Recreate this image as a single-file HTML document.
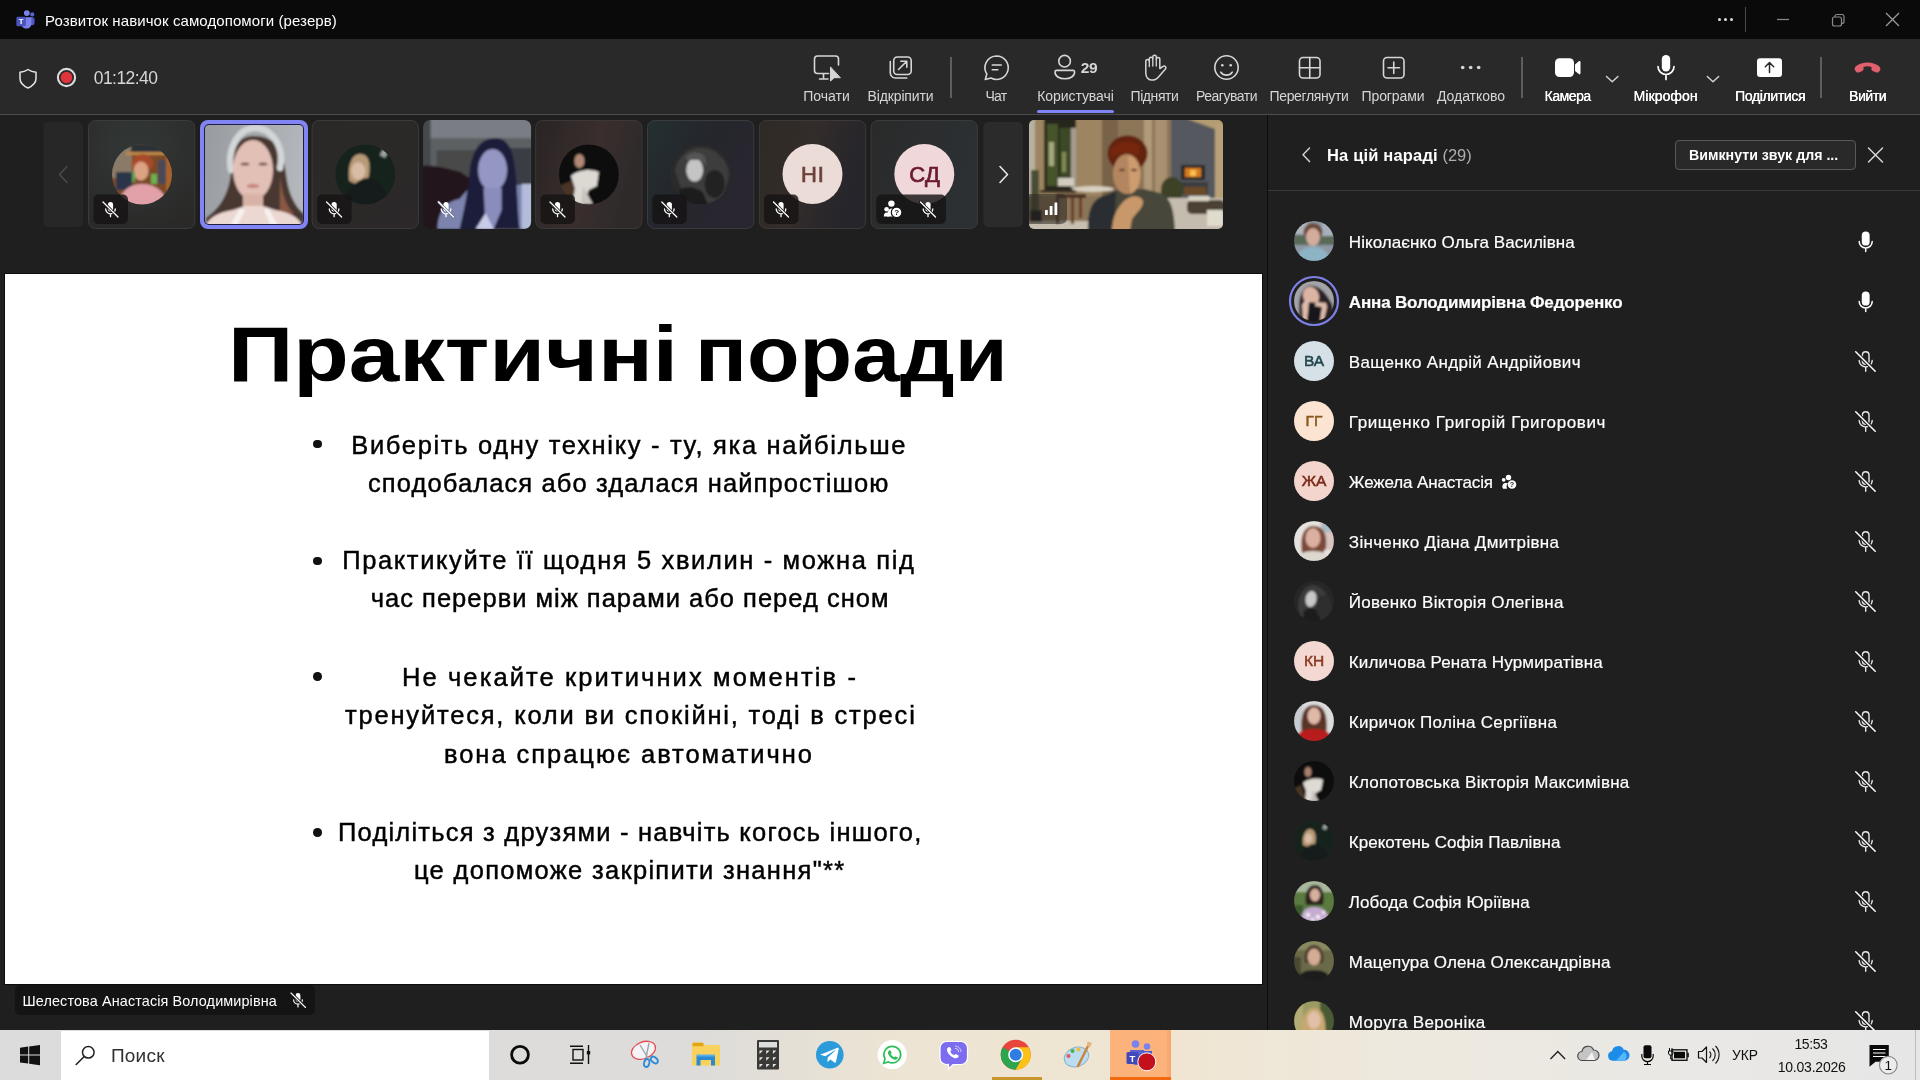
<!DOCTYPE html>
<html lang="uk">
<head>
<meta charset="utf-8">
<title>Розвиток навичок самодопомоги (резерв)</title>
<style>
*{box-sizing:border-box;margin:0;padding:0}
body{will-change:transform}
html,body{width:1920px;height:1080px;overflow:hidden;background:#1f1f1f;font-family:"Liberation Sans",sans-serif;color:#fff}
svg{display:block;overflow:visible}
.abs{position:absolute}
#titlebar{position:absolute;left:0;top:0;width:1920px;height:39px;background:#0a0a0a}
#titlebar .ttl{letter-spacing:0.090px;position:absolute;left:45px;top:12px;font-size:15px;line-height:18px;color:#fff;white-space:nowrap}
#toolbar{position:absolute;left:0;top:39px;width:1920px;height:76px;background:#292929;border-bottom:1px solid #4c4c4c}
#timer{letter-spacing:-0.540px;position:absolute;left:93.700px;top:29px;font-size:17.5px;line-height:20px;color:#d6d6d6;white-space:nowrap}
.lb{position:absolute;top:49px;width:140px;margin-left:-70px;text-align:center;font-size:14px;line-height:16px;color:#d6d6d6;white-space:nowrap;letter-spacing:-0.250px}
.lb.w{color:#fff;text-shadow:0.35px 0 0 #fff}
.sep{position:absolute;width:1.500px;background:#5e5e5e;top:18px;height:41px}
#main{position:absolute;left:0;top:115px;width:1267px;height:915px;background:#1f1f1f}
#slide{box-shadow:0 0 0 1px #0c0c0c;position:absolute;left:5px;top:274px;width:1257px;height:710px;background:#fff;color:#000;overflow:hidden}
#panel{position:absolute;left:1267px;top:115px;width:653px;height:915px;background:#1f1f1f;border-left:1px solid #0c0c0c;overflow:hidden}
#taskbar{position:absolute;left:0;top:1030px;width:1920px;height:50px;background:linear-gradient(90deg,#dcdcdc 0,#dddcda 700px,#ede4d3 900px,#efe5d2 1180px,#eee9de 1400px,#e9e8e6 1700px,#e6e6e6 1920px);overflow:hidden}
.sl{position:absolute;font-size:25.500px;line-height:32px;white-space:nowrap;color:#000;-webkit-text-stroke:0.450px #000}
.dot{position:absolute;left:308px;width:8.600px;height:8.600px;border-radius:50%;background:#111}
.pn{-webkit-text-stroke:0.200px #fff;position:absolute;left:80.800px;font-size:17px;line-height:21px;white-space:nowrap;color:#fff}
.pn.b{font-weight:bold}
.st{top:35px;font-size:78px;line-height:90px;font-weight:bold;white-space:nowrap;transform-origin:0 0}
</style>
</head>
<body>
<div id="titlebar">
  <svg class="abs" style="left:14.500px;top:8.500px" width="20" height="20" viewBox="0 0 22 22">
    <circle cx="13" cy="4.5" r="3.2" fill="#7b83eb"/>
    <circle cx="19" cy="6" r="2.3" fill="#5b62c9"/>
    <rect x="15.5" y="9" width="6" height="9" rx="2.5" fill="#5059c9"/>
    <path d="M7 9h11v7.5a5 5 0 0 1-5 5h-1a5 5 0 0 1-5-5z" fill="#7b83eb"/>
    <rect x="1.5" y="8.5" width="10.5" height="10.5" rx="1.5" fill="#4b53bc"/>
    <text x="6.75" y="16.8" font-size="8.5" font-weight="bold" fill="#fff" text-anchor="middle" font-family="Liberation Sans, sans-serif">T</text>
  </svg>
  <div class="ttl">Розвиток навичок самодопомоги (резерв)</div>
  <svg class="abs" style="left:0;top:0" width="1920" height="39" viewBox="0 0 1920 39">
    <g fill="#e0e0e0"><circle cx="1719.5" cy="19.5" r="1.5"/><circle cx="1725.5" cy="19.5" r="1.5"/><circle cx="1731.5" cy="19.5" r="1.5"/></g>
    <rect x="1745" y="7" width="1" height="25" fill="#4a4a4a"/>
    <g stroke="#8a8a8a" stroke-width="1.2" fill="none">
      <path d="M1777 19.5h12"/>
      <rect x="1832.5" y="17" width="9" height="9" rx="2"/>
      <path d="M1835 17v-0.500a2 2 0 0 1 2-2h5a2 2 0 0 1 2 2v5a2 2 0 0 1-2 2h-0.500"/>
    </g>
    <path d="M1886 13l13 13M1899 13l-13 13" stroke="#9a9a9a" stroke-width="1.3" fill="none"/>
  </svg>
</div>
<div id="toolbar">
  <svg class="abs" style="left:0;top:0" width="1920" height="75" viewBox="0 39 1920 75" fill="none" stroke="#d6d6d6" stroke-width="1.6" stroke-linecap="round" stroke-linejoin="round">
    <!-- shield -->
    <path d="M28 69.500c3 2 5.500 2.500 8 2.800v6.200c0 4.500-3.500 7.500-8 9.500c-4.500-2-8-5-8-9.500v-6.200c2.500-0.300 5-0.800 8-2.800z" stroke="#e6e6e6" stroke-width="1.5"/>
    <!-- record -->
    <circle cx="66.500" cy="77.500" r="8.600" stroke="#dcdcdc" stroke-width="2.100"/>
    <circle cx="66.500" cy="77.500" r="5.800" fill="#e0343c" stroke="none"/>
    <!-- pochaty: monitor + cursor -->
    <path d="M828.500 73.500h-11a3 3 0 0 1-3-3v-11.500a3 3 0 0 1 3-3h18a3 3 0 0 1 3 3v6"/>
    <path d="M823.500 74v4.800M819.500 79h8.500"/>
    <path d="M830.500 67.300v13.700l3.700-3.300h5.800z" fill="#d6d6d6" stroke-width="1"/>
    <!-- vidkripyty -->
    <rect x="893.700" y="57" width="17.500" height="17.500" rx="3.500"/>
    <path d="M890.300 61.500v11.500a5 5 0 0 0 5 5h11.500"/>
    <path d="M898.500 69.500l7.800-7.800M900.800 61.300h6v6"/>
    <!-- chat -->
    <path d="M996.600 56a11.700 11.700 0 1 1-5.600 22l-5.700 1.500l1.500-5.500a11.700 11.700 0 0 1 9.800-18z"/>
    <path d="M992.300 65h9M992.300 69.800h5.500"/>
    <!-- people -->
    <circle cx="1064.600" cy="61.200" r="5.800"/>
    <path d="M1056.500 70.400h16.600a1.500 1.500 0 0 1 1.500 1.500c0 4.400-4.300 6.900-9.800 6.900s-9.800-2.500-9.800-6.900a1.500 1.500 0 0 1 1.500-1.500z"/>
    <!-- hand -->
    <path d="M1145.800 73V61.200a1.750 1.750 0 0 1 3.500 0V59a1.750 1.750 0 0 1 3.500 0V57.100a1.750 1.750 0 0 1 3.500 0V59.300a1.750 1.750 0 0 1 3.500 0V68.600l3.300-2.300a1.800 1.800 0 0 1 2.500 2.500L1158.300 77.200c-1.200 1.800-2.800 2.800-5 2.800h-2c-3 0-5.500-2.800-5.500-7z" stroke-width="1.500"/>
    <path d="M1149.300 61.200V66.500M1152.800 59V66M1156.300 59.300V66" stroke-width="1.300"/>
    <!-- smiley -->
    <circle cx="1226.500" cy="67.500" r="11.700"/>
    <path d="M1220.800 72.200a7 7 0 0 0 11.400 0"/>
    <circle cx="1222.300" cy="65.200" r="1.300" fill="#d6d6d6" stroke="none"/>
    <circle cx="1230.700" cy="65.200" r="1.300" fill="#d6d6d6" stroke="none"/>
    <!-- grid -->
    <rect x="1299.500" y="57.500" width="20.500" height="20.500" rx="3.500"/>
    <path d="M1309.750 57.500v20.500M1299.500 67.750h20.500"/>
    <!-- apps -->
    <rect x="1383.500" y="57.500" width="20.500" height="20.500" rx="3.500"/>
    <path d="M1393.750 62v11.500M1388 67.750h11.500"/>
    <!-- more -->
    <g fill="#d6d6d6" stroke="none"><circle cx="1462.700" cy="67.500" r="1.800"/><circle cx="1470.700" cy="67.500" r="1.800"/><circle cx="1478.700" cy="67.500" r="1.800"/></g>
    <!-- camera -->
    <g fill="#fff" stroke="none">
      <rect x="1555" y="58.300" width="19" height="18.800" rx="4.500"/>
      <path d="M1575 64.500l3.800-3.200a1 1 0 0 1 1.700 0.800v11.200a1 1 0 0 1-1.700 0.800l-3.800-3.200z"/>
    </g>
    <path d="M1606.500 76.500l5.700 5.200l5.700-5.200" stroke="#d6d6d6" stroke-width="1.400"/>
    <!-- mic -->
    <rect x="1661.800" y="55" width="8.400" height="16.400" rx="4.200" fill="#fff" stroke="none"/>
    <path d="M1658 66.500a8 8 0 0 0 16 0M1666 74.800v4.700" stroke="#fff" stroke-width="1.700"/>
    <path d="M1707.300 76.500l5.700 5.200l5.700-5.200" stroke="#d6d6d6" stroke-width="1.400"/>
    <!-- share -->
    <rect x="1757" y="58.300" width="25" height="18.800" rx="3" fill="#fff" stroke="none"/>
    <path d="M1769.500 72.500v-9.500M1765.300 66.700l4.200-4.200l4.200 4.200" stroke="#292929" stroke-width="1.500"/>
    <!-- leave -->
    <path d="M1855.300 70.800c-1.200-1.300-0.700-3.600 0.900-4.800c3-2.300 7-3.500 11.300-3.500s8.300 1.200 11.300 3.500c1.600 1.200 2.100 3.500 0.900 4.800l-1 1.100c-0.600 0.700-1.600 0.900-2.400 0.500l-3.600-1.500c-0.900-0.400-1.400-1.300-1.300-2.200l0.200-1.800c-2.700-0.800-5.500-0.800-8.200 0l0.200 1.800c0.100 0.900-0.400 1.800-1.300 2.200l-3.600 1.500c-0.800 0.400-1.800 0.200-2.400-0.500z" fill="#e0606e" stroke="none"/>
  </svg>
  <div id="timer">01:12:40</div>
  <div class="sep" style="left:950px"></div>
  <div class="sep" style="left:1521px"></div>
  <div class="sep" style="left:1820px"></div>
  <div class="lb" style="left:826.500px;letter-spacing:0.00px">Почати</div>
  <div class="lb" style="left:900.500px;letter-spacing:-0.13px">Відкріпити</div>
  <div class="lb" style="left:996px;letter-spacing:-0.75px">Чат</div>
  <div class="lb" style="left:1075.500px;letter-spacing:-0.07px">Користувачі</div>
  <div class="lb" style="left:1154.500px;letter-spacing:-0.41px">Підняти</div>
  <div class="lb" style="left:1226.500px;letter-spacing:-0.49px">Реагувати</div>
  <div class="lb" style="left:1309px;letter-spacing:-0.36px">Переглянути</div>
  <div class="lb" style="left:1393px;letter-spacing:-0.10px">Програми</div>
  <div class="lb" style="left:1471px;letter-spacing:-0.04px">Додатково</div>
  <div class="lb w" style="left:1567.500px;letter-spacing:-0.48px">Камера</div>
  <div class="lb w" style="left:1665.500px;letter-spacing:0.06px">Мікрофон</div>
  <div class="lb w" style="left:1770px;letter-spacing:-0.36px">Поділитися</div>
  <div class="lb w" style="left:1867.500px;letter-spacing:-0.45px">Вийти</div>
  <div class="abs" style="left:1080.800px;top:20.500px;font-size:15.500px;line-height:16px;font-weight:bold;color:#d6d6d6;letter-spacing:-0.3px">29</div>
  <div class="abs" style="left:1037px;top:70.500px;width:77px;height:3.500px;border-radius:1.750px;background:#7f85f5"></div>
</div>
<div id="main"></div>
<svg class="abs" style="left:40px;top:116px" width="1190" height="116" viewBox="40 116 1190 116" font-family="Liberation Sans, sans-serif">
  <defs>
    <filter id="b1" x="-20%" y="-20%" width="140%" height="140%"><feGaussianBlur stdDeviation="1.100"/></filter>
    <filter id="b2" x="-20%" y="-20%" width="140%" height="140%"><feGaussianBlur stdDeviation="2.500"/></filter>
    <filter id="b3" x="-30%" y="-30%" width="160%" height="160%"><feGaussianBlur stdDeviation="5"/></filter>
    <g id="micoff" fill="none" stroke="#fff" stroke-linecap="round">
      <rect x="-2.600" y="-7.500" width="5.200" height="9.500" rx="2.600" fill="#fff" stroke="none"/>
      <path d="M-4.800 -0.500a4.800 4.800 0 0 0 9.600 0M0 4.500v2.700" stroke-width="1.300"/>
      <path d="M-7.500 -7.500l15 15" stroke="#1c1c1c" stroke-width="3"/>
      <path d="M-7.500 -7.500l15 15" stroke-width="1.200"/>
    </g>
    <clipPath id="cA1"><circle cx="142" cy="174.500" r="30"/></clipPath>
    <clipPath id="cT2"><rect x="205" y="125" width="98" height="99" rx="4"/></clipPath>
    <clipPath id="cA3"><circle cx="366" cy="174.500" r="30"/></clipPath>
    <clipPath id="cT4"><rect x="423.500" y="120" width="108" height="109" rx="7"/></clipPath>
    <clipPath id="cA5"><circle cx="590" cy="174.500" r="30"/></clipPath>
    <clipPath id="cA6"><circle cx="702" cy="174.500" r="30"/></clipPath>
    <clipPath id="cT9"><rect x="1029" y="120" width="194" height="109" rx="5"/></clipPath>
    <radialGradient id="gT1" cx="0.45" cy="0.25" r="0.8"><stop offset="0" stop-color="#323836"/><stop offset="1" stop-color="#2a2928"/></radialGradient>
    <linearGradient id="gT3" x1="0" y1="0" x2="1" y2="1"><stop offset="0" stop-color="#2b2928"/><stop offset="1" stop-color="#2c2829"/></linearGradient>
    <linearGradient id="gT5" x1="0" y1="0" x2="1" y2="0.300"><stop offset="0" stop-color="#2a2424"/><stop offset="0.600" stop-color="#3a2e2e"/><stop offset="1" stop-color="#2e2a2a"/></linearGradient>
    <linearGradient id="gT6" x1="0" y1="0" x2="1" y2="0.600"><stop offset="0" stop-color="#243032"/><stop offset="0.500" stop-color="#24262c"/><stop offset="1" stop-color="#2a2630"/></linearGradient>
    <linearGradient id="gT7" x1="0" y1="0" x2="1" y2="0.300"><stop offset="0" stop-color="#2e2a24"/><stop offset="0.500" stop-color="#332c2a"/><stop offset="1" stop-color="#25252b"/></linearGradient>
    <linearGradient id="gT8" x1="0" y1="0" x2="1" y2="0.300"><stop offset="0" stop-color="#2a2a2a"/><stop offset="0.500" stop-color="#2b2d2f"/><stop offset="1" stop-color="#2c3032"/></linearGradient>
    <linearGradient id="gBg2" x1="0" y1="0" x2="1" y2="0.200"><stop offset="0" stop-color="#979b9f"/><stop offset="1" stop-color="#b3b7bb"/></linearGradient>
  </defs>
  <!-- nav left -->
  <rect x="43.500" y="122" width="39.500" height="105" rx="5" fill="#272727"/>
  <path d="M67 166.500l-7.500 8l7.500 8" fill="none" stroke="#4a4a4a" stroke-width="1.500" stroke-linecap="round" stroke-linejoin="round"/>
  <!-- tile 1 -->
  <rect x="88.500" y="120.500" width="106.300" height="108" rx="7" fill="url(#gT1)" stroke="#3c3c3c"/>
  <g clip-path="url(#cA1)"><g filter="url(#b1)">
    <rect x="110" y="142" width="64" height="64" fill="#7a4a26"/>
    <rect x="110" y="142" width="22" height="36" fill="#8a7a68"/>
    <rect x="131" y="144" width="32" height="8" fill="#2c3038"/>
    <rect x="126" y="152" width="40" height="3" fill="#c08a48"/>
    <rect x="116" y="172" width="16" height="18" fill="#2a3448"/>
    <rect x="158" y="160" width="8" height="24" fill="#4a4a58"/>
    <rect x="166" y="156" width="8" height="34" fill="#a8642c"/>
    <ellipse cx="142.500" cy="163" rx="11" ry="9" fill="#a84a2c"/>
    <ellipse cx="141" cy="171" rx="7.500" ry="9.500" fill="#dca284"/>
    <rect x="151" y="174" width="6" height="10" fill="#6cb050"/>
    <rect x="132" y="172" width="3" height="10" fill="#58a050"/>
    <path d="M118 206c2-14 10-22 24-22s24 8 26 22z" fill="#e2a0a8"/>
  </g></g>
  <!-- tile 2 active -->
  <rect x="200" y="120" width="108" height="109" rx="8" fill="#8185f3"/>
  <rect x="204" y="124" width="100" height="101" rx="5" fill="#1d1d46"/>
  <g clip-path="url(#cT2)"><g filter="url(#b1)">
    <rect x="203" y="123" width="102" height="103" fill="url(#gBg2)"/>
    <path d="M254 136c-14 0-21 10-22 26c-1 22-6 42-26 56v8h98v-12c-10-8-16-22-18-40c-2-20-8-38-32-38z" fill="#4a3832"/>
    <path d="M280 176c2 18 6 30 14 38l-14 2z" fill="#8a5844"/>
    <path d="M231 170c-4-22 8-42 24-42s30 18 25 40" fill="none" stroke="#d2d6d6" stroke-width="6.500" stroke-linecap="round"/>
    <ellipse cx="253" cy="170" rx="20" ry="30" fill="#e2c0b6"/>
    <path d="M243 194h20v18h-20z" fill="#d8b2a6"/>
    <path d="M205 228c2-10 14-16 28-18l12-4h18l12 4c14 2 26 8 28 18z" fill="#ecd8d2"/>
    <path d="M240 208l-10 18h7l8-16zM268 208l10 18h-7l-7-16z" fill="#f6f2f0"/>
    <ellipse cx="253" cy="186" rx="6.500" ry="2.200" fill="#c88880"/>
    <ellipse cx="245" cy="164" rx="4.500" ry="1.600" fill="#7a5a54"/>
    <ellipse cx="263" cy="164" rx="4.500" ry="1.600" fill="#7a5a54"/>
  </g></g>
  <!-- tile 3 -->
  <g transform="translate(-0.7 0)">
  <rect x="312.800" y="120.500" width="106.300" height="108" rx="7" fill="url(#gT3)" stroke="#3c3c3c"/>
  <g clip-path="url(#cA3)"><g filter="url(#b1)">
    <rect x="335" y="143" width="62" height="62" fill="#16211f"/>
    <path d="M350 181c-2-15 2-27 11-27s11 11 8 24l-8 8z" fill="#b89a78"/>
    <ellipse cx="359" cy="171" rx="7" ry="9" fill="#d8bca4"/>
    <path d="M346 206c0-14 8-24 20-28c10 0 22 8 24 28z" fill="#121c1a"/>
    <rect x="382" y="150" width="6" height="7" fill="#9aa4a0" transform="rotate(30 385 153)"/>
  </g></g>
    </g>
  <!-- tile 4 video -->
  <g transform="translate(-0.4 0)">
  <g clip-path="url(#cT4)"><g filter="url(#b1)">
    <rect x="421" y="118" width="112" height="113" fill="#5c6064"/>
    <rect x="421" y="118" width="112" height="20" fill="#7a7e84"/>
    <rect x="421" y="118" width="10" height="60" fill="#44484c"/>
    <rect x="437" y="150" width="46" height="34" fill="#4a4a48"/>
    <rect x="498" y="148" width="34" height="40" fill="#3a3c44"/>
    <path d="M421 166c10-2 26 2 40 6l20 14v45h-60z" fill="#24141a"/>
    <path d="M438 229c0-16 8-28 22-30l12-14h58v44z" fill="#7c84ae"/>
    <path d="M522 184h12v45h-12z" fill="#b4bcdc"/>
    <path d="M496 138c-16 0-24 14-26 34c-2 22-6 40-10 57h60c-2-16-2-36-4-56c-2-20-6-35-20-35z" fill="#1c1c3a"/>
    <ellipse cx="493" cy="170" rx="14.500" ry="21" fill="#9496c4"/>
    <path d="M484 188h18v22l-8 19h-8z" fill="#8a8cbc"/>
    <path d="M476 229l10-16l8 16z" fill="#c8cce8"/>
  </g></g>
    </g>
  <!-- tile 5 -->
  <g transform="translate(-1.1 0)">
  <rect x="536.800" y="120.500" width="106.300" height="108" rx="7" fill="url(#gT5)" stroke="#3c3838"/>
  <g clip-path="url(#cA5)"><g filter="url(#b1)">
    <rect x="559" y="143" width="62" height="62" fill="#0c0a0a"/>
    <path d="M560 186l14-6l8 26h-22z" fill="#4a3428"/>
    <ellipse cx="580.500" cy="161" rx="5" ry="7" fill="#b08874"/>
    <path d="M572 176c6-6 20-8 28-4l-2 14l-8 4l-6 16l-10-4l2-14z" fill="#dcd8d2"/>
    <path d="M584 186l10 18h-12z" fill="#c8c4be"/>
  </g></g>
    </g>
  <!-- tile 6 -->
  <g transform="translate(-1.3 0)">
  <rect x="648.800" y="120.500" width="106.300" height="108" rx="7" fill="url(#gT6)" stroke="#3a3c3e"/>
  <g clip-path="url(#cA6)"><g filter="url(#b1)">
    <rect x="671" y="143" width="62" height="62" fill="#2a2a2a"/>
    <path d="M676 170c4-16 16-24 30-22c14 2 24 14 24 28l-6 22l-20 8l-18-6z" fill="#3c3c3c"/>
    <ellipse cx="696" cy="170" rx="8.500" ry="11.500" fill="#c4c4c4"/>
    <path d="M686 158c4-6 14-8 20-2l2 10l-6-6h-12z" fill="#555"/>
    <path d="M680 190c6-4 16-4 24 2l6 14h-26z" fill="#1e1e1e"/>
    <ellipse cx="716" cy="184" rx="10" ry="14" fill="#242424"/>
  </g></g>
    </g>
  <!-- tile 7 HI -->
  <g transform="translate(-0.5 0)">
  <rect x="759.800" y="120.500" width="106.300" height="108" rx="7" fill="url(#gT7)" stroke="#3c3a38"/>
  <circle cx="813" cy="174" r="30" fill="#ebdcd8"/>
  <text x="813.300" y="181.700" font-size="22" fill="#6b4038" stroke="#6b4038" stroke-width="0.700" text-anchor="middle" letter-spacing="0.800">НІ</text>
    </g>
  <!-- tile 8 SD -->
  <g transform="translate(-0.7 0)">
  <rect x="871.800" y="120.500" width="106.300" height="108" rx="7" fill="url(#gT8)" stroke="#3a3c3c"/>
  <circle cx="925" cy="174" r="30" fill="#efd7da"/>
  <text x="925.500" y="181.700" font-size="22" fill="#6a1a2a" stroke="#6a1a2a" stroke-width="0.700" text-anchor="middle" letter-spacing="0.300">СД</text>
    </g>
  <!-- self view -->
  <g clip-path="url(#cT9)"><g filter="url(#b1)">
    <rect x="1027" y="118" width="198" height="113" fill="#9c8560"/>
    <rect x="1027" y="118" width="8" height="113" fill="#b8b0a0"/>
    <rect x="1027" y="196" width="80" height="35" fill="#8a7458"/>
    <rect x="1027" y="221" width="70" height="10" fill="#c6beae"/>
    <rect x="1044" y="118" width="32" height="72" fill="#26261e"/>
    <rect x="1047" y="124" width="11" height="62" fill="#46522c"/>
    <rect x="1060" y="128" width="11" height="58" fill="#3c4828"/>
    <rect x="1049" y="142" width="5" height="24" fill="#a4a87c"/>
    <rect x="1062" y="152" width="4" height="20" fill="#808c54"/>
    <rect x="1071" y="128" width="5" height="60" fill="#a49c90"/>
    <rect x="1102" y="118" width="70" height="84" fill="#8c7658"/>
    <rect x="1102" y="118" width="16" height="84" fill="#78644a"/>
    <rect x="1144" y="118" width="8" height="84" fill="#b09a78"/>
    <rect x="1155" y="118" width="12" height="84" fill="#a89070"/>
    <rect x="1171" y="118" width="45" height="80" fill="#54585e"/>
    <path d="M1185 118l38 14v-14z" fill="#b49c72"/>
    <rect x="1215" y="124" width="10" height="80" fill="#b8a078"/>
    <rect x="1181" y="165" width="24" height="15" fill="#2c2a28"/>
    <rect x="1185" y="168" width="16" height="9" fill="#d87a1c"/>
    <rect x="1190" y="170" width="6" height="6" fill="#f8c050"/>
    <rect x="1180" y="182" width="28" height="12" fill="#3a3c3c"/>
    <rect x="1184" y="187" width="22" height="8" fill="#6a4a28"/>
    <ellipse cx="1172" cy="190" rx="11" ry="13" fill="#3c4228"/>
    <rect x="1166" y="198" width="59" height="33" fill="#c4bcae"/>
    <rect x="1187" y="200" width="38" height="14" rx="5" fill="#4c4236"/>
    <rect x="1188" y="196" width="22" height="5" rx="2" fill="#d8d2c6"/>
    <rect x="1207" y="210" width="16" height="16" fill="#e0dccc"/>
    <ellipse cx="1093" cy="189" rx="21" ry="3" fill="#d8d0c0"/>
    <rect x="1040" y="190" width="36" height="3" fill="#3a3028"/>
    <rect x="1058" y="178" width="16" height="8" fill="#d0ccc0"/>
    <rect x="1031" y="170" width="8" height="40" fill="#4a4e34"/>
    <rect x="1030" y="210" width="12" height="12" fill="#1e1c1a"/>
    <rect x="1056" y="196" width="3" height="28" fill="#5a3420"/>
    <rect x="1071" y="196" width="3" height="28" fill="#6a3c22"/>
    <rect x="1079" y="196" width="3" height="22" fill="#6a3c22"/>
    <rect x="1056" y="194" width="30" height="4" fill="#4a3020"/>
    <path d="M1088 231c0-22 4-32 18-36l14-6h24l16 4c10 4 14 14 15 38z" fill="#46473a"/>
    <path d="M1088 231c0-22 4-32 18-36l10-4l-2 40z" fill="#2c2e32"/>
    <ellipse cx="1127.500" cy="153.500" rx="20" ry="18" fill="#64220f"/>
    <ellipse cx="1127" cy="174" rx="14" ry="20" fill="#b48660"/>
    <path d="M1128 156c8 0 12 10 12 20s-4 16-10 18z" fill="#cc9c6e"/>
    <path d="M1110 150c6-8 18-12 30-4l-2 10c-8-6-18-4-26 2z" fill="#74280f"/>
    <path d="M1112 231c0-12 4-22 12-30c6-6 14-6 18-2c4 6-4 12-10 20l-2 12z" fill="#c8986a"/>
    <ellipse cx="1122" cy="170" rx="3" ry="1.200" fill="#5a3a28"/>
    <ellipse cx="1134" cy="170" rx="3" ry="1.200" fill="#5a3a28"/>
  </g></g>
  <path d="M1029 194h32a6 6 0 0 1 6 6v18a6 6 0 0 1-6 6h-32z" fill="#2a2622" fill-opacity="0.550"/>
  <g fill="#fff"><rect x="1045" y="210" width="2.800" height="5" rx="0.500"/><rect x="1049.700" y="206" width="2.800" height="9" rx="0.500"/><rect x="1054.500" y="202.500" width="2.800" height="12.500" rx="0.500"/></g>
  <!-- nav right -->
  <rect x="983.300" y="122" width="39.500" height="105" rx="5" fill="#2b2b2b"/>
  <path d="M1000 166.500l7.500 8l-7.500 8" fill="none" stroke="#e8e8e8" stroke-width="1.600" stroke-linecap="round" stroke-linejoin="round"/>
  <!-- badges -->
  <g fill="#161414" fill-opacity="0.820">
    <rect x="93.500" y="194.500" width="34.500" height="29.500" rx="5"/>
    <rect x="317.100" y="194.500" width="34.500" height="29.500" rx="5"/>
    <rect x="540.500" y="194.500" width="34.500" height="29.500" rx="5"/>
    <rect x="652.300" y="194.500" width="34.500" height="29.500" rx="5"/>
    <rect x="764" y="194.500" width="34.500" height="29.500" rx="5"/>
    <rect x="876.300" y="194.500" width="69.700" height="29.500" rx="5"/>
  </g>
  <use href="#micoff" x="110.500" y="209.500"/>
  <use href="#micoff" x="334.100" y="209.500"/>
  <g transform="translate(446 209.500)" fill="none" stroke="#fff" stroke-linecap="round"><rect x="-2.600" y="-7.500" width="5.200" height="9.500" rx="2.600" fill="#fff" stroke="none"/><path d="M-4.800 -0.500a4.800 4.800 0 0 0 9.600 0M0 4.500v2.700" stroke-width="1.300"/><path d="M-7.500 -7.500l15 15" stroke="#6a6e8a" stroke-width="2.600"/><path d="M-7.500 -7.500l15 15" stroke-width="1.200"/></g>
  <use href="#micoff" x="557.500" y="209.500"/>
  <use href="#micoff" x="669.300" y="209.500"/>
  <use href="#micoff" x="781" y="209.500"/>
  <use href="#micoff" x="928" y="209.500"/>
  <!-- guest icon tile 8 -->
  <g fill="#fff">
    <circle cx="891.400" cy="203.600" r="3.200"/>
    <circle cx="886.600" cy="209.300" r="2.300"/>
    <path d="M883.800 216.500c0-2.600 1.200-4 2.800-4s2.800 1.400 2.800 4z"/>
    <path d="M887 216.500c0-5 2-8 4.400-8s4.400 3 4.400 8z"/>
    <circle cx="896.600" cy="212.400" r="5.300" stroke="#161414" stroke-width="1.200"/>
  </g>
  <text x="896.600" y="215.400" font-size="8" font-weight="bold" fill="#161414" text-anchor="middle">?</text>
</svg>
<div id="slide">
  <div class="abs st" id="st1" style="left:222.500px;transform:scaleX(1.165)">Практичні</div>
  <div class="abs st" id="st2" style="left:690px;transform:scaleX(1.104)">поради</div>
  <div class="sl" style="left:346.2px;top:154.5px;letter-spacing:1.68px">Виберіть одну техніку - ту, яка найбільше</div>
  <div class="sl" style="left:363.0px;top:192.9px;letter-spacing:1.11px">сподобалася або здалася найпростішою</div>
  <div class="sl" style="left:337.2px;top:270.2px;letter-spacing:1.63px">Практикуйте її щодня 5 хвилин - можна під</div>
  <div class="sl" style="left:365.8px;top:307.9px;letter-spacing:1.00px">час перерви між парами або перед сном</div>
  <div class="sl" style="left:397.0px;top:387.2px;letter-spacing:2.10px">Не чекайте критичних моментів -</div>
  <div class="sl" style="left:340.0px;top:425.2px;letter-spacing:1.81px">тренуйтеся, коли ви спокійні, тоді в стресі</div>
  <div class="sl" style="left:439.0px;top:463.9px;letter-spacing:1.96px">вона спрацює автоматично</div>
  <div class="sl" style="left:333.0px;top:541.9px;letter-spacing:1.22px">Поділіться з друзями - навчіть когось іншого,</div>
  <div class="sl" style="left:409.0px;top:579.5px;letter-spacing:1.30px">це допоможе закріпити знання"**</div>
  <div class="dot" style="top:165.7px"></div>
  <div class="dot" style="top:282.7px"></div>
  <div class="dot" style="top:398.4px"></div>
  <div class="dot" style="top:554.4px"></div>
</div>
<div id="panel">
  <div class="abs" style="left:0;top:75px;width:652px;height:1px;background:#3a3a3a"></div>
  <div class="abs" id="phd" style="left:59px;top:29.500px;font-size:16.500px;line-height:20px;white-space:nowrap"><b style="letter-spacing:0.17px">На цій нараді</b> <span style="color:#adadad">(29)</span></div>
  <div class="abs" style="left:407px;top:25px;width:181px;height:30px;border:1px solid #5a5a5a;border-radius:4px;background:#292929"></div>
  <div class="abs" id="pbtn" style="left:421px;top:31px;font-size:14.200px;line-height:18px;font-weight:bold;white-space:nowrap">Вимкнути звук для ...</div>
  <div class="pn" style="top:116.5px;letter-spacing:0.07px">Ніколаєнко Ольга Василівна</div>
  <div class="pn b" style="top:176.5px;letter-spacing:-0.16px">Анна Володимирівна Федоренко</div>
  <div class="pn" style="top:236.5px;letter-spacing:0.34px">Ващенко Андрій Андрійович</div>
  <div class="pn" style="top:296.5px;letter-spacing:0.60px">Грищенко Григорій Григорович</div>
  <div class="pn" style="top:356.5px;letter-spacing:-0.14px">Жежела Анастасія</div>
  <div class="pn" style="top:416.5px;letter-spacing:0.32px">Зінченко Діана Дмитрівна</div>
  <div class="pn" style="top:476.5px;letter-spacing:0.26px">Йовенко Вікторія Олегівна</div>
  <div class="pn" style="top:536.5px;letter-spacing:0.16px">Киличова Рената Нурмиратівна</div>
  <div class="pn" style="top:596.5px;letter-spacing:0.30px">Киричок Поліна Сергіївна</div>
  <div class="pn" style="top:656.5px;letter-spacing:0.25px">Клопотовська Вікторія Максимівна</div>
  <div class="pn" style="top:716.5px;letter-spacing:0.03px">Крекотень Софія Павлівна</div>
  <div class="pn" style="top:776.5px;letter-spacing:0.05px">Лобода Софія Юріївна</div>
  <div class="pn" style="top:836.5px;letter-spacing:0.12px">Мацепура Олена Олександрівна</div>
  <div class="pn" style="top:896.5px;letter-spacing:0.34px">Моруга Вероніка</div>
  <svg class="abs" style="left:0;top:0" width="652" height="915" viewBox="1268 115 652 915" font-family="Liberation Sans, sans-serif">
    <defs>
      <g id="pmic"><rect x="-3.950" y="-9.400" width="7.900" height="14" rx="3.950" fill="#fff"/><path d="M-6.500 0.500a6.500 6.500 0 0 0 13 0M0 7v3.500" fill="none" stroke="#fff" stroke-width="1.500" stroke-linecap="round"/></g>
      <g id="pmoff" fill="none" stroke="#e8e8e8" stroke-width="1.400" stroke-linecap="round"><rect x="-3.300" y="-9.200" width="6.600" height="12.500" rx="3.300"/><path d="M-6.500 -0.500a6.500 6.500 0 0 0 13 0M0 6.200v4"/><path d="M-10 -9.200L9.500 10.200" stroke="#1f1f1f" stroke-width="3.600"/><path d="M-10 -9.200L9.500 10.200" stroke="#fff" stroke-width="1.500"/></g>
      <filter id="pb" x="-20%" y="-20%" width="140%" height="140%"><feGaussianBlur stdDeviation="0.800"/></filter>
    </defs>
    <path d="M1309.500 148l-6.500 6.800l6.500 6.800" fill="none" stroke="#d0d0d0" stroke-width="1.500" stroke-linecap="round" stroke-linejoin="round"/>
    <path d="M1868.500 148l14 14M1882.500 148l-14 14" fill="none" stroke="#d6d6d6" stroke-width="1.500" stroke-linecap="round"/>
    <use href="#pmic" x="1865.700" y="241"/>
    <use href="#pmic" x="1865.700" y="301"/>
    <use href="#pmoff" x="1865.700" y="361"/>
    <use href="#pmoff" x="1865.700" y="421"/>
    <use href="#pmoff" x="1865.700" y="481"/>
    <use href="#pmoff" x="1865.700" y="541"/>
    <use href="#pmoff" x="1865.700" y="601"/>
    <use href="#pmoff" x="1865.700" y="661"/>
    <use href="#pmoff" x="1865.700" y="721"/>
    <use href="#pmoff" x="1865.700" y="781"/>
    <use href="#pmoff" x="1865.700" y="841"/>
    <use href="#pmoff" x="1865.700" y="901"/>
    <use href="#pmoff" x="1865.700" y="961"/>
    <use href="#pmoff" x="1865.700" y="1021"/>
    <defs><clipPath id="pc0"><circle cx="1314" cy="241" r="20"/></clipPath><clipPath id="pc1"><circle cx="1314" cy="301" r="20"/></clipPath><clipPath id="pc2"><circle cx="1314" cy="361" r="20"/></clipPath><clipPath id="pc3"><circle cx="1314" cy="421" r="20"/></clipPath><clipPath id="pc4"><circle cx="1314" cy="481" r="20"/></clipPath><clipPath id="pc5"><circle cx="1314" cy="541" r="20"/></clipPath><clipPath id="pc6"><circle cx="1314" cy="601" r="20"/></clipPath><clipPath id="pc7"><circle cx="1314" cy="661" r="20"/></clipPath><clipPath id="pc8"><circle cx="1314" cy="721" r="20"/></clipPath><clipPath id="pc9"><circle cx="1314" cy="781" r="20"/></clipPath><clipPath id="pc10"><circle cx="1314" cy="841" r="20"/></clipPath><clipPath id="pc11"><circle cx="1314" cy="901" r="20"/></clipPath><clipPath id="pc12"><circle cx="1314" cy="961" r="20"/></clipPath><clipPath id="pc13"><circle cx="1314" cy="1021" r="20"/></clipPath></defs>
    <g clip-path="url(#pc0)"><g transform="translate(1314 241)" filter="url(#pb)"><rect x="-21" y="-21" width="42" height="42" fill="#8e98a4"/><rect x="-21" y="-6" width="42" height="10" fill="#5a6a58"/><rect x="-21" y="-21" width="14" height="14" fill="#b0b4bc"/><rect x="8" y="-21" width="13" height="16" fill="#a8b0bc"/><ellipse cx="-1" cy="-9" rx="9.500" ry="9" fill="#6a4a38"/><ellipse cx="-1" cy="-4" rx="7" ry="9" fill="#d4ac9c"/><path d="M-17 21c0-10 6-15 16-15s16 5 16 15z" fill="#8cb4c4"/></g></g>
    <circle cx="1314" cy="301" r="24" fill="none" stroke="#7d80e6" stroke-width="2.200"/>
    <g clip-path="url(#pc1)"><g transform="translate(1314 301)" filter="url(#pb)"><rect x="-21" y="-21" width="42" height="42" fill="#a4a4a8"/><path d="M-14 21c-2-16-2-30 8-36c10-2 18 6 24 18l4 18z" fill="#2a2226"/><ellipse cx="-3" cy="-5" rx="8" ry="9.500" fill="#dcb4a4" transform="rotate(-20 -3 -5)"/><path d="M-12 21l2-16l6-4l14 2l4 18z" fill="#18161a"/><path d="M-12 4l4-6l3 2l-2 20h-4zM2 1l10 1l1 4l-3 13h-4l2-13l-7-1z" fill="#e0bcac"/></g></g>
    <circle cx="1314" cy="361" r="20" fill="#d5e1e7"/><text x="1314" y="366.4" font-size="15.500" fill="#24474f" stroke="#24474f" stroke-width="0.550" text-anchor="middle" letter-spacing="0">ВА</text>
    <circle cx="1314" cy="421" r="20" fill="#fbe5d2"/><text x="1314" y="426.4" font-size="15.500" fill="#8b5a1e" stroke="#8b5a1e" stroke-width="0.550" text-anchor="middle" letter-spacing="0">ГГ</text>
    <circle cx="1314" cy="481" r="20" fill="#f3d5cd"/><text x="1314" y="486.4" font-size="15.500" fill="#7a2a19" stroke="#7a2a19" stroke-width="0.550" text-anchor="middle" letter-spacing="0">ЖА</text>
    <circle cx="1314" cy="661" r="20" fill="#f4d9d2"/><text x="1314" y="666.4" font-size="15.500" fill="#8a3a22" stroke="#8a3a22" stroke-width="0.550" text-anchor="middle" letter-spacing="0">КН</text>
    <g clip-path="url(#pc5)"><g transform="translate(1314 541)" filter="url(#pb)"><rect x="-21" y="-21" width="42" height="42" fill="#e6e2de"/><rect x="6" y="-21" width="15" height="30" fill="#d8c4c0"/><rect x="8" y="-21" width="10" height="12" fill="#a8bcc4"/><path d="M-12 12c-2-14 0-26 11-27c12 0 14 10 13 22l-4 6z" fill="#7a4a38"/><ellipse cx="-1" cy="-3" rx="7.500" ry="10" fill="#dcb0a0"/><path d="M-18 21c2-8 8-11 17-11s15 3 18 11z" fill="#dcd8d0"/></g></g>
    <g clip-path="url(#pc6)"><g transform="translate(1314 601)" filter="url(#pb)"><rect x="-21" y="-21" width="42" height="42" fill="#262626"/><path d="M-16 8c0-14 6-24 16-24c10 2 16 12 18 26l-8 12h-20z" fill="#3a3a3a"/><ellipse cx="-3" cy="-2" rx="5.500" ry="8" fill="#c8c8c8" transform="rotate(10 -3 -2)"/><path d="M-10 10c4-4 10-4 14 0l4 12h-20z" fill="#1a1a1a"/><ellipse cx="10" cy="6" rx="8" ry="12" fill="#2e2e2e"/></g></g>
    <g clip-path="url(#pc8)"><g transform="translate(1314 721)" filter="url(#pb)"><rect x="-21" y="-21" width="42" height="42" fill="#dcdcdc"/><rect x="-21" y="-21" width="10" height="42" fill="#c8ccd0"/><path d="M-12 14c-2-16 0-30 12-30s14 14 12 30z" fill="#5a3428"/><ellipse cx="0" cy="-5" rx="6.500" ry="8.500" fill="#e0b8a8"/><path d="M-19 21c1-10 8-13 19-13s18 3 19 13z" fill="#b81c1c"/></g></g>
    <g clip-path="url(#pc9)"><g transform="translate(1314 781)" filter="url(#pb)"><rect x="-21" y="-21" width="42" height="42" fill="#0e0c0c"/><path d="M-21 8l8-4l6 17h-14z" fill="#4a3428"/><ellipse cx="-6" cy="-9" rx="3.500" ry="5" fill="#a88070"/><path d="M-11 2c4-4 14-6 20-3l-2 10l-5 3l-4 9l-7-2l1-9z" fill="#dedad4"/><path d="M-1 9l6 12h-8z" fill="#c4c0ba"/></g></g>
    <g clip-path="url(#pc10)"><g transform="translate(1314 841)" filter="url(#pb)"><rect x="-21" y="-21" width="42" height="42" fill="#18221f"/><path d="M-11 4c-1-9 2-16 7-16s7 7 5 15l-4 4z" fill="#b89a78"/><ellipse cx="-5.500" cy="-2.500" rx="3.800" ry="5" fill="#d8bca4"/><path d="M-14 21c0-9 5-16 13-18c7 0 15 5 16 18z" fill="#131c1a"/><rect x="9" y="-16" width="4" height="4.500" fill="#9aa4a0" transform="rotate(30 11 -14)"/></g></g>
    <g clip-path="url(#pc11)"><g transform="translate(1314 901)" filter="url(#pb)"><rect x="-21" y="-21" width="42" height="42" fill="#5a7a40"/><rect x="-21" y="-21" width="42" height="12" fill="#a8b89c"/><rect x="-21" y="4" width="10" height="17" fill="#3a5a2c"/><path d="M-8 4c-2-12 2-20 9-20s10 8 8 20z" fill="#2a201e"/><ellipse cx="1" cy="-6" rx="5" ry="6.500" fill="#d8b09c"/><path d="M-13 21c0-10 4-15 13-15s15 5 15 15z" fill="#c4acd0"/><path d="M-8 12h4v4h-4zM2 14h4v4h-4zM8 10h3v3h-3zM-3 17h3v3h-3z" fill="#f0e8f4"/></g></g>
    <g clip-path="url(#pc12)"><g transform="translate(1314 961)" filter="url(#pb)"><rect x="-21" y="-21" width="42" height="42" fill="#6a6a48"/><rect x="-21" y="-21" width="42" height="10" fill="#8a8a60"/><rect x="-21" y="-4" width="8" height="20" fill="#4a4a30"/><path d="M-9 2c-2-10 2-18 9-18s11 8 9 18z" fill="#4a3a2c"/><ellipse cx="0" cy="-4" rx="6.500" ry="8.500" fill="#d4ac94"/><path d="M-17 21c1-9 7-12 17-12s16 3 17 12z" fill="#1e1e1c"/></g></g>
    <g clip-path="url(#pc13)"><g transform="translate(1314 1021)" filter="url(#pb)"><rect x="-21" y="-21" width="42" height="42" fill="#9a9a62"/><rect x="6" y="-21" width="15" height="42" fill="#4a5a34"/><rect x="-21" y="-21" width="10" height="42" fill="#b4ac74"/><path d="M-12 21c-2-18 2-34 12-34s13 14 11 34z" fill="#c8a870"/><ellipse cx="0" cy="-1" rx="6.500" ry="9" fill="#e0c0a8"/></g></g>
    <g fill="#fff"><circle cx="1508.500" cy="477.500" r="2.700"/><circle cx="1503.700" cy="479.800" r="1.900"/><path d="M1502.300 487c0-2.600 1.300-3.900 3-3.900h2.600c-1.300 1.300-1.700 3.500-0.900 5.600h-3.900z"/><circle cx="1512" cy="484.500" r="4.300"/></g><text x="1512" y="487.200" font-size="7.200" font-weight="bold" fill="#1f1f1f" text-anchor="middle">?</text>
  </svg>
</div>
<div class="abs" style="left:15px;top:985px;width:300px;height:29.500px;border-radius:5px;background:#141414"></div>
<div class="abs" id="nlabel" style="letter-spacing:0.125px;left:22.500px;top:992px;font-size:14.400px;line-height:18px;color:#fff;white-space:nowrap">Шелестова Анастасія Володимирівна</div>
<svg class="abs" style="left:288px;top:990px" width="20" height="20" viewBox="-10 -10 20 20">
  <rect x="-2.400" y="-7" width="4.800" height="9" rx="2.400" fill="#fff"/>
  <path d="M-4.400 -0.200a4.400 4.400 0 0 0 8.800 0M0 4.300v2.700" fill="none" stroke="#fff" stroke-width="1.200" stroke-linecap="round"/>
  <path d="M-7 -7l14.500 14.500" stroke="#141414" stroke-width="3"/>
  <path d="M-7 -7l14.500 14.500" stroke="#fff" stroke-width="1.100" stroke-linecap="round"/>
</svg>
<div id="taskbar">
  <div class="abs" style="left:61px;top:1px;width:428px;height:49px;background:#fff"></div>
  <div class="abs" style="left:1110px;top:0;width:61px;height:50px;background:#fbb27b"></div>
  <div class="abs" style="left:1166.500px;top:0;width:4.500px;height:50px;background:#f9a96d"></div>
  <div class="abs" style="left:1110px;top:47px;width:61px;height:3px;background:#f4690f"></div>
  <div class="abs" style="left:991.500px;top:47px;width:50px;height:3px;background:#c8962c"></div>
  <div class="abs" style="left:1914.500px;top:0;width:1px;height:50px;background:#bdbdbd"></div>
  <div class="abs" id="tsearch" style="left:111px;top:13.500px;font-size:19px;line-height:24px;color:#303030;white-space:nowrap;letter-spacing:0.2px">Поиск</div>
  <div class="abs" id="tlang" style="left:1732px;top:17px;font-size:13.800px;line-height:18px;color:#111;white-space:nowrap">УКР</div>
  <div class="abs" id="ttime" style="letter-spacing:-0.400px;left:1771px;top:5px;width:80px;text-align:center;font-size:14px;line-height:18px;color:#111;white-space:nowrap">15:53</div>
  <div class="abs" id="tdate" style="letter-spacing:-0.200px;left:1771.700px;top:28px;width:80px;text-align:center;font-size:14px;line-height:18px;color:#111;white-space:nowrap">10.03.2026</div>
  <svg class="abs" style="left:0;top:0" width="1920" height="50" viewBox="0 1030 1920 50" font-family="Liberation Sans, sans-serif">
    <!-- windows logo -->
    <g fill="#111"><path d="M20 1047.700l8.200-1.100v8h-8.200zM29.200 1046.400l10.800-1.500v9.700h-10.800zM20 1055.600h8.200v8l-8.200-1.100zM29.200 1055.600h10.800v9.700l-10.800-1.500z"/></g>
    <!-- search icon -->
    <circle cx="88.300" cy="1052.300" r="5.800" fill="none" stroke="#222" stroke-width="1.500"/>
    <path d="M84.200 1056.500l-8 8" stroke="#222" stroke-width="1.600" stroke-linecap="round"/>
    <!-- cortana -->
    <circle cx="520" cy="1054.700" r="8.400" fill="none" stroke="#0a0a0a" stroke-width="2.800"/>
    <!-- task view -->
    <g fill="none" stroke="#111" stroke-width="1.400"><rect x="573" y="1049.500" width="10" height="10.500"/><path d="M570 1046.200h13M570 1063.300h13M588.500 1045v19"/></g>
    <rect x="586.800" y="1051" width="3.400" height="3.400" fill="#111"/>
    <!-- snipping -->
    <ellipse cx="643.500" cy="1050.300" rx="12.500" ry="8.300" fill="#f4f4f6" stroke="#e84a50" stroke-width="1.300" transform="rotate(-22 643.500 1050.300)"/>
    <path d="M640 1045l8 13M649 1043l-3 15" stroke="#a0a4aa" stroke-width="1.400"/>
    <ellipse cx="646.700" cy="1063" rx="2.600" ry="4" fill="none" stroke="#2a8ad8" stroke-width="1.800" transform="rotate(15 646.700 1063)"/>
    <ellipse cx="654.300" cy="1060" rx="2.600" ry="4" fill="none" stroke="#2a8ad8" stroke-width="1.800" transform="rotate(-50 654.300 1060)"/>
    <!-- explorer -->
    <path d="M692 1043.500a1 1 0 0 1 1-1h9.500l2 2.500h14.500a1 1 0 0 1 1 1v19.500h-28z" fill="#f8d25c"/>
    <rect x="692.500" y="1042.700" width="11" height="3.600" rx="1" fill="#e0a616"/>
    <path d="M696.500 1065.500v-9.500h18.500v9.500h-4v-5.500h-10.500v5.500z" fill="#2b8ad6"/>
    <rect x="696.500" y="1054.500" width="18.500" height="2" fill="#5ab0ea"/>
    <!-- calculator -->
    <rect x="757" y="1040" width="22" height="29.500" rx="1" fill="#3b3937"/>
    <rect x="759" y="1042" width="18" height="5.500" fill="#dedede"/>
    <g fill="#e4e4e4"><path d="M759.500 1050.500h3.500l-3.500 3.500zM766.200 1050.500h3.500l-3.500 3.500zM772.900 1050.500h3.500l-3.500 3.500zM759.500 1057.200h3.500l-3.500 3.500zM766.200 1057.200h3.500l-3.500 3.500zM772.900 1057.200h3.500l-3.500 3.500zM759.500 1063.900h3.500l-3.500 3.500zM766.200 1063.900h3.500l-3.500 3.500zM772.900 1063.900h3.500l-3.500 3.500z"/></g>
    <!-- telegram -->
    <circle cx="829.800" cy="1054.700" r="13.800" fill="#2b9bd9"/>
    <path d="M821.500 1054.300l16-6.500c0.800-0.300 1.400 0.200 1.200 1.200l-2.700 12.800c-0.200 0.900-0.800 1.100-1.500 0.700l-4.200-3.100l-2 2c-0.300 0.300-0.500 0.400-0.900 0.400l0.300-4.300l7.800-7c0.300-0.300-0.100-0.500-0.500-0.200l-9.600 6l-4.100-1.300c-0.900-0.300-0.900-0.900 0.200-1.300z" fill="#fff"/>
    <!-- whatsapp -->
    <circle cx="892.200" cy="1054.700" r="14.600" fill="#fff"/>
    <path d="M892.400 1046.300a8.300 8.300 0 1 1-4 15.600l-4.700 1.300l1.300-4.500a8.300 8.300 0 0 1 7.400-12.400z" fill="#fff" stroke="#2cc05a" stroke-width="1.700"/>
    <path d="M889.200 1050.500c0.500-0.500 1.200-0.400 1.500 0.200l0.800 1.700c0.200 0.400 0.100 0.800-0.200 1.100l-0.600 0.600c0.700 1.400 1.800 2.500 3.200 3.200l0.600-0.600c0.300-0.300 0.700-0.400 1.100-0.200l1.700 0.800c0.600 0.300 0.700 1 0.200 1.500c-1 1-2.300 1.300-3.700 0.700c-2.600-1-4.700-3.100-5.700-5.700c-0.500-1.300-0.100-2.500 1.100-3.300z" fill="#2cc05a"/>
    <!-- viber -->
    <path d="M946.500 1041.500h14.500a6.500 6.500 0 0 1 6.500 6.500v10a6.500 6.500 0 0 1-6.500 6.500h-8l-4.500 4.500v-4.800a6.500 6.500 0 0 1-8.500-6.200v-10a6.500 6.500 0 0 1 6.500-6.500z" fill="#7b6cf0" stroke="#fff" stroke-width="1.200"/>
    <path d="M948.500 1047.300c0.600-0.600 1.400-0.500 1.800 0.200l1 2c0.200 0.500 0.100 1-0.300 1.300l-0.700 0.700c0.800 1.700 2.100 3 3.800 3.800l0.700-0.700c0.400-0.400 0.900-0.500 1.300-0.300l2 1c0.700 0.400 0.800 1.200 0.200 1.800c-1.200 1.200-2.700 1.500-4.400 0.800c-3-1.200-5.500-3.700-6.700-6.700c-0.600-1.500-0.200-2.900 1.300-3.900z" fill="#fff"/>
    <path d="M955 1046a6 6 0 0 1 6 6M955 1048.300a3.700 3.700 0 0 1 3.700 3.700" fill="none" stroke="#d8d2fa" stroke-width="1"/>
    <!-- chrome -->
    <circle cx="1015.700" cy="1054.700" r="15" fill="#e8453c"/>
    <path d="M1015.700 1054.700l-12.990 -7.500a15 15 0 0 0 12.990 22.500l6.500 -11.250z" fill="#2da44e"/>
    <path d="M1015.700 1054.700h15a15 15 0 0 1-15 15l7.500-12.990z" fill="#fbc116"/>
    <path d="M1015.700 1047.200h12.990a15 15 0 0 1 2.010 7.500a15 15 0 0 1-15 15l6.500-11.250z" fill="#fbc116"/>
    <circle cx="1015.700" cy="1054.700" r="7.500" fill="#fff"/>
    <circle cx="1015.700" cy="1054.700" r="6" fill="#2f7de1"/>
    <!-- paint -->
    <ellipse cx="1076.500" cy="1057" rx="12.500" ry="9.500" fill="#bcdcf0" stroke="#8ab4d0" stroke-width="1" transform="rotate(-20 1076.500 1057)"/>
    <circle cx="1068.500" cy="1056" r="2" fill="#e05a5a"/><circle cx="1072.500" cy="1051" r="2" fill="#4cb04c"/><circle cx="1078.500" cy="1049.500" r="2" fill="#f0c030"/>
    <path d="M1089 1044l-11 22" stroke="#c8823c" stroke-width="2.400" stroke-linecap="round"/>
    <path d="M1087.500 1041.500l4.500 1.500l-2 4.500l-3-1.500z" fill="#e0b880"/>
    <!-- teams -->
    <circle cx="1135.500" cy="1044" r="3.800" fill="#7b83eb"/>
    <circle cx="1147" cy="1046.500" r="3.300" fill="#7b83eb"/>
    <path d="M1130 1050h14v9a6 6 0 0 1-6 6h-2a6 6 0 0 1-6-6z" fill="#5b63d3"/>
    <path d="M1143 1051h9v7a4.500 4.500 0 0 1-9 0z" fill="#5059c9"/>
    <rect x="1126.500" y="1052" width="12" height="12" rx="1.500" fill="#4149b8"/>
    <text x="1132.500" y="1061.600" font-size="9.500" font-weight="bold" fill="#fff" text-anchor="middle">T</text>
    <circle cx="1146.800" cy="1061.800" r="9" fill="#c4101c" stroke="#fff" stroke-width="1"/>
    <!-- tray chevron -->
    <path d="M1550.500 1059l7.300-7.500l7.300 7.500" fill="none" stroke="#222" stroke-width="1.400"/>
    <!-- grey cloud -->
    <path d="M1582.500 1060.500a4.500 4.500 0 0 1-0.500-9a6 6 0 0 1 11.500-1.500a5.200 5.200 0 0 1 0.500 10.500z" fill="#c4c4c4" stroke="#4a4a4a" stroke-width="1.200"/>
    <path d="M1586 1060l6-8l3 8z" fill="#f2f2f2"/>
    <!-- blue cloud -->
    <path d="M1612.500 1060.800a4.800 4.800 0 0 1-0.500-9.500a6.200 6.200 0 0 1 11.800-1.500a5.500 5.500 0 0 1 0.500 11z" fill="#1d8be8"/>
    <path d="M1616 1060.800l8-9a5.500 5.500 0 0 1 0.300 9z" fill="#55b8f8"/>
    <!-- tray mic -->
    <rect x="1643.500" y="1045.300" width="8" height="13" rx="2" fill="#0a0a0a"/>
    <path d="M1641.800 1054v2a5.700 5.700 0 0 0 11.400 0v-2M1647.500 1061.700v2.600M1644 1064.500h7" fill="none" stroke="#0a0a0a" stroke-width="1.200"/>
    <!-- battery -->
    <rect x="1672" y="1049.800" width="15" height="10.500" fill="none" stroke="#0a0a0a" stroke-width="1.300"/>
    <rect x="1674" y="1051.800" width="11" height="6.500" fill="#0a0a0a"/>
    <rect x="1687.300" y="1052.800" width="1.500" height="4.500" fill="#0a0a0a"/>
    <path d="M1669.500 1048v3M1672 1048v3M1668.500 1051h4.500v2a2.200 2.200 0 0 1-4.500 0zM1670.700 1055v4h2" fill="none" stroke="#0a0a0a" stroke-width="1"/>
    <!-- speaker -->
    <path d="M1698.500 1051.500h3.500l4.500-4.500v15.500l-4.500-4.500h-3.500z" fill="none" stroke="#111" stroke-width="1.200" stroke-linejoin="round"/>
    <path d="M1709.500 1051.500a4.500 4.500 0 0 1 0 6.500M1712.500 1048.500a8.500 8.500 0 0 1 0 12.500M1715.500 1046a12.500 12.500 0 0 1 0 17.500" fill="none" stroke="#111" stroke-width="1.100"/>
    <!-- notifications -->
    <path d="M1869.500 1045h19.300v16.800h-13.300l-6 5z" fill="#0a0a0a"/>
    <path d="M1873 1049.500h12.500M1873 1053h12.500M1873 1056.500h12.500" stroke="#fff" stroke-width="1.200"/>
    <circle cx="1888.300" cy="1065.200" r="8.800" fill="#ececec" stroke="#8a8a8a" stroke-width="1.100"/>
    <text x="1888.300" y="1070" font-size="13.500" fill="#111" text-anchor="middle">1</text>
  </svg>
</div>
</body>
</html>
